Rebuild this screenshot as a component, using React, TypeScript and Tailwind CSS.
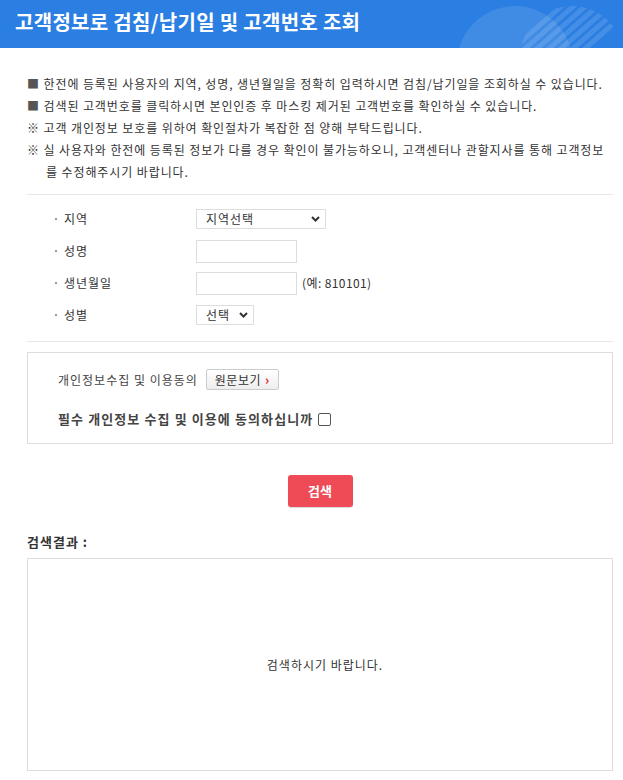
import { useState } from 'react';

const FONT = "font-['Noto_Sans_CJK_KR','Noto_Sans',sans-serif]";

const notices = [
  { mark: '■', text: '한전에 등록된 사용자의 지역, 성명, 생년월일을 정확히 입력하시면 검침/납기일을 조회하실 수 있습니다.' },
  { mark: '■', text: '검색된 고객번호를 클릭하시면 본인인증 후 마스킹 제거된 고객번호를 확인하실 수 있습니다.' },
  { mark: '※', text: '고객 개인정보 보호를 위하여 확인절차가 복잡한 점 양해 부탁드립니다.' },
  { mark: '※', text: '실 사용자와 한전에 등록된 정보가 다를 경우 확인이 불가능하오니, 고객센터나 관할지사를 통해 고객정보를 수정해주시기 바랍니다.' },
];

function HeaderDeco() {
  return (
    <svg width="180" height="48" viewBox="443 0 180 48" className="absolute right-0 top-0">
      <defs>
        <clipPath id="c2">
          <circle cx="572" cy="58" r="52" />
        </clipPath>
      </defs>
      <circle cx="515" cy="64" r="58" fill="#ffffff" fillOpacity="0.1" />
      <g clipPath="url(#c2)" stroke="#ffffff" strokeOpacity="0.12" strokeWidth="5">
        <line x1="500" y1="60" x2="580" y2="-10" />
        <line x1="512" y1="60" x2="592" y2="-10" />
        <line x1="524" y1="60" x2="604" y2="-10" />
        <line x1="536" y1="60" x2="616" y2="-10" />
        <line x1="548" y1="60" x2="628" y2="-10" />
        <line x1="560" y1="60" x2="640" y2="-10" />
        <line x1="572" y1="60" x2="652" y2="-10" />
      </g>
    </svg>
  );
}

function Chevron() {
  return (
    <svg width="9" height="6" viewBox="0 0 9 6" className="pointer-events-none absolute right-[6px] top-[7px]">
      <path d="M1 1 L4.5 4.5 L8 1" stroke="#333" strokeWidth="2" fill="none" />
    </svg>
  );
}

function FormRow({ label, children }: { label: string; children: React.ReactNode }) {
  return (
    <div className="flex h-[32px] items-center">
      <div className="flex w-[169px] items-center pl-[28px]">
        <span className="mr-[7px] inline-block h-[2px] w-[2px] bg-[#999]"></span>
        <span className="tracking-[1px]">{label}</span>
      </div>
      <div className="flex items-center">{children}</div>
    </div>
  );
}

export default function App() {
  const [agree, setAgree] = useState(false);

  return (
    <div className={`${FONT} min-h-[780px] bg-white text-[12px] text-[#333]`}>
      <div className="relative h-[48px] overflow-hidden bg-[#2b7fe3]">
        <h1 className="relative z-10 pl-[15px] pt-[7px] text-[20px] font-bold leading-[30px] tracking-[0.3px] text-white">
          고객정보로 검침/납기일 및 고객번호 조회
        </h1>
        <HeaderDeco />
      </div>

      <div className="ml-[27px] w-[586px]">
        <ul className="mt-[25px] pb-[11px] leading-[22px]">
          {notices.map((n, i) => (
            <li key={i} className="break-all pl-[19px] indent-[-19px] tracking-[0.9px]">
              <span className={n.mark === '■' ? 'text-[#555]' : ''}>{n.mark}</span> {n.text}
            </li>
          ))}
        </ul>

        <div className="border-t border-[#e8e8e8] pt-[8px]">
          <FormRow label="지역">
            <div className="relative">
              <select className="h-[20px] w-[130px] appearance-none border border-[#ddd] bg-white pl-[9px] text-[12px] tracking-[1px] text-[#333] outline-none">
                <option>지역선택</option>
              </select>
              <Chevron />
            </div>
          </FormRow>
          <FormRow label="성명">
            <input className="h-[23px] w-[101px] border border-[#ddd] outline-none" />
          </FormRow>
          <FormRow label="생년월일">
            <input className="h-[23px] w-[101px] border border-[#ddd] outline-none" />
            <span className="ml-[5px] tracking-[0.4px]">(예: 810101)</span>
          </FormRow>
          <FormRow label="성별">
            <div className="relative">
              <select className="h-[20px] w-[58px] appearance-none border border-[#ddd] bg-white pl-[9px] text-[12px] tracking-[1px] text-[#333] outline-none">
                <option>선택</option>
              </select>
              <Chevron />
            </div>
          </FormRow>
        </div>

        <div className="mt-[10px] border-t border-[#e8e8e8] pt-[10px]">
          <div className="border border-[#ddd] px-[30px] pb-[14px] pt-[15px]">
            <div className="flex h-[23px] items-center">
              <span className="tracking-[1px] text-[#444]">개인정보수집 및 이용동의</span>
              <button className="ml-[8px] flex h-[21px] items-center rounded-[2px] border border-[#ccc] bg-gradient-to-b from-white to-[#eee] px-[8px] text-[12px] tracking-[0.5px] text-[#333]">
                원문보기
                <span className="ml-[4px] text-[13px] font-bold text-[#e02020]">›</span>
              </button>
            </div>
            <label className="mt-[18px] flex h-[20px] items-center text-[13px] font-bold tracking-[1.1px] text-[#444]">
              필수 개인정보 수집 및 이용에 동의하십니까
              <input
                type="checkbox"
                checked={agree}
                onChange={(e) => setAgree(e.target.checked)}
                className="ml-[5px] h-[13px] w-[13px] appearance-none rounded-[2px] border border-[#555] bg-white checked:bg-[#2b7fe3]"
              />
            </label>
          </div>
        </div>

        <div className="mt-[31px] flex justify-center">
          <button className="h-[32px] w-[65px] rounded-[3px] bg-[#ef4b56] text-[13px] font-bold text-white shadow-[0_1px_1px_rgba(0,0,0,0.15)]">
            검색
          </button>
        </div>

        <div className="mt-[26px] text-[13px] font-bold leading-[18px] tracking-[1px] text-[#333]">검색결과 :</div>
        <div className="mt-[7px] flex h-[213px] items-center justify-center border border-[#ddd]">
          <span className="pl-[10px] tracking-[1px]">검색하시기 바랍니다.</span>
        </div>
      </div>
    </div>
  );
}
